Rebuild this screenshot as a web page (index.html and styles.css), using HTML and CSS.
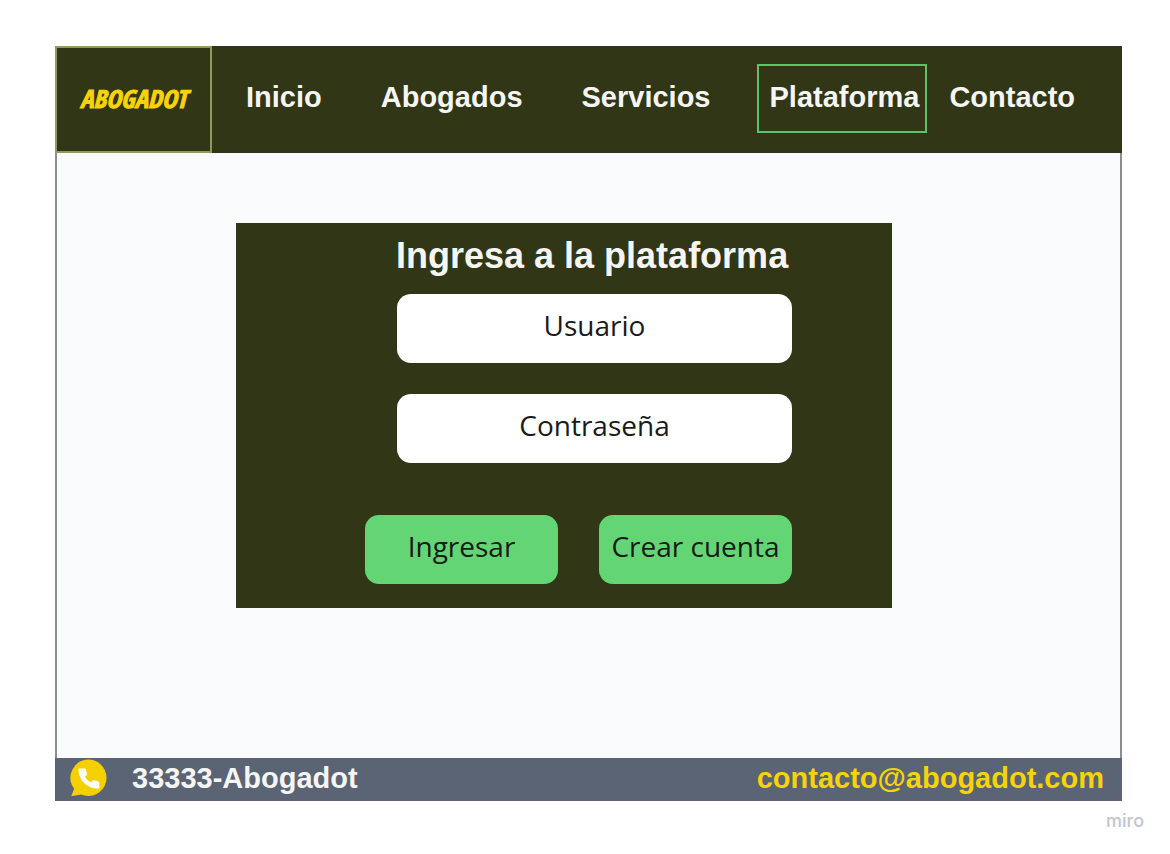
FILE: index.html
```html
<!DOCTYPE html>
<html lang="es">
<head>
  <meta charset="utf-8">
  <meta name="viewport" content="width=device-width, initial-scale=1">
  <title>Abogadot</title>
  <link rel="stylesheet" href="styles.css">
</head>
<body>
  <div class="site">
    <header class="header">
      <a class="logo" href="#">ABOGADOT</a>
      <nav class="nav">
        <a class="nav-link" href="#">Inicio</a>
        <a class="nav-link" href="#">Abogados</a>
        <a class="nav-link" href="#">Servicios</a>
        <a class="nav-link nav-link-current" href="#" aria-current="page">Plataforma</a>
        <a class="nav-link nav-link-last" href="#">Contacto</a>
      </nav>
    </header>
    <main class="main">
      <form class="panel">
        <h1 class="title">Ingresa a la plataforma</h1>
        <div class="fields">
          <input class="field" type="text" placeholder="Usuario" aria-label="Usuario">
          <input class="field" type="password" placeholder="Contraseña" aria-label="Contraseña">
        </div>
        <div class="actions">
          <button class="button" type="button">Ingresar</button>
          <button class="button" type="button">Crear cuenta</button>
        </div>
      </form>
    </main>
    <footer class="footer">
      <svg class="phone-icon" viewBox="0 0 38 38" aria-hidden="true">
        <path fill="#f5d000" d="M19 0.5A18.3 18.3 0 1 1 11 35.6L1.2 37.2L4.2 29.8A18.3 18.3 0 0 1 19 0.5Z"/>
        <path fill="#fff" d="M9.600 9.600h5c.8 0 1.200.4 1.400 1.100l.9 4.200c.1.700-.1 1.200-.6 1.600l-1.400 1.100c1.600 2.800 3.500 4.500 6.300 5.800l1.300-1.600c.5-.6 1-.7 1.700-.5l4 1.300c.8.300 1.100.7 1.100 1.500v4.200c0 .9-.4 1.300-1.300 1.300C17.200 29.600 8.600 20.500 8.500 10.900c0-.9.3-1.300 1.100-1.300Z"/>
      </svg>
      <span class="phone">33333-Abogadot</span>
      <a class="email" href="mailto:contacto@abogadot.com">contacto@abogadot.com</a>
    </footer>
  </div>
  <div class="credit">miro</div>
</body>
</html>
```
FILE: styles.css
```css
* {
  box-sizing: border-box;
}

body {
  display: flex;
  flex-direction: column;
  min-height: 100vh;
  margin: 0;
  padding: 46px 26px 20px 55px;
  background: #fff;
  color: #f5f5f3;
  font-family: "Liberation Sans", Arial, sans-serif;
}

a {
  color: inherit;
  text-decoration: none;
}

.site {
  display: flex;
  flex: 1;
  flex-direction: column;
  margin-right: 22px;
}

.header {
  display: flex;
  min-height: 107px;
  background: #313616;
}

.logo {
  display: flex;
  align-items: center;
  justify-content: center;
  width: 157px;
  padding-bottom: 4px;
  border: 2px solid #8f9b5d;
  color: #f7d308;
  font-family: "Liberation Sans Narrow", "Arial Narrow", "Open Sans Condensed", "Liberation Sans", sans-serif;
  font-size: 25px;
  font-style: italic;
  font-weight: 700;
  -webkit-text-stroke: 1px #f7d308;
}

.nav {
  display: flex;
  flex: 1;
  align-items: center;
  padding: 0 0 2px 34px;
  font-size: 29px;
  font-weight: 700;
  line-height: 32px;
}

.nav-link + .nav-link {
  margin-left: 59px;
}

.nav .nav-link-current {
  margin-left: 46px;
  padding: 15px 6px 18px 11px;
  border: 2px solid #5cc468;
}

.nav .nav-link-last {
  margin-left: 22px;
}

.nav-link:not(.nav-link-current) {
  padding-bottom: 3px;
}

.main {
  flex: 1;
  padding: 70px 228px 70px 179px;
  border: solid #8d8d8d;
  border-width: 0 2px;
  background: #fafbfd;
}

.panel {
  padding: 13px 100px 24px 129px;
  background: #313616;
}

.title {
  margin: 0 0 18px;
  padding-left: 31px;
  font-size: 36px;
  font-weight: 700;
  line-height: 40px;
}

.fields {
  display: grid;
  gap: 31px;
  padding-left: 32px;
}

.field,
.button {
  width: 100%;
  height: 69px;
  border: 0;
  border-radius: 14px;
  padding: 0 0 8px;
  color: #1a1a1a;
  font-family: "Open Sans", sans-serif;
  font-size: 28px;
  text-align: center;
}

.field {
  background: #fff;
}

.field::placeholder {
  color: #1a1a1a;
  opacity: 1;
}

.actions {
  display: grid;
  grid-template-columns: 1fr 1fr;
  gap: 41px;
  margin-top: 52px;
}

.button {
  background: #64d574;
  white-space: nowrap;
}

.footer {
  display: flex;
  align-items: center;
  min-height: 43px;
  padding: 0 18px 3px 15px;
  background: #5a6474;
  font-size: 29px;
  font-weight: 700;
  line-height: 32px;
}

.phone-icon {
  width: 38px;
  height: 38px;
  margin-right: 24px;
}

.email {
  margin-left: auto;
  color: #f7d308;
}

.credit {
  align-self: flex-end;
  padding-top: 7px;
  color: #c4c4ce;
  font-family: Inter, sans-serif;
  font-size: 18px;
  font-weight: 500;
  line-height: 26px;
}
```
